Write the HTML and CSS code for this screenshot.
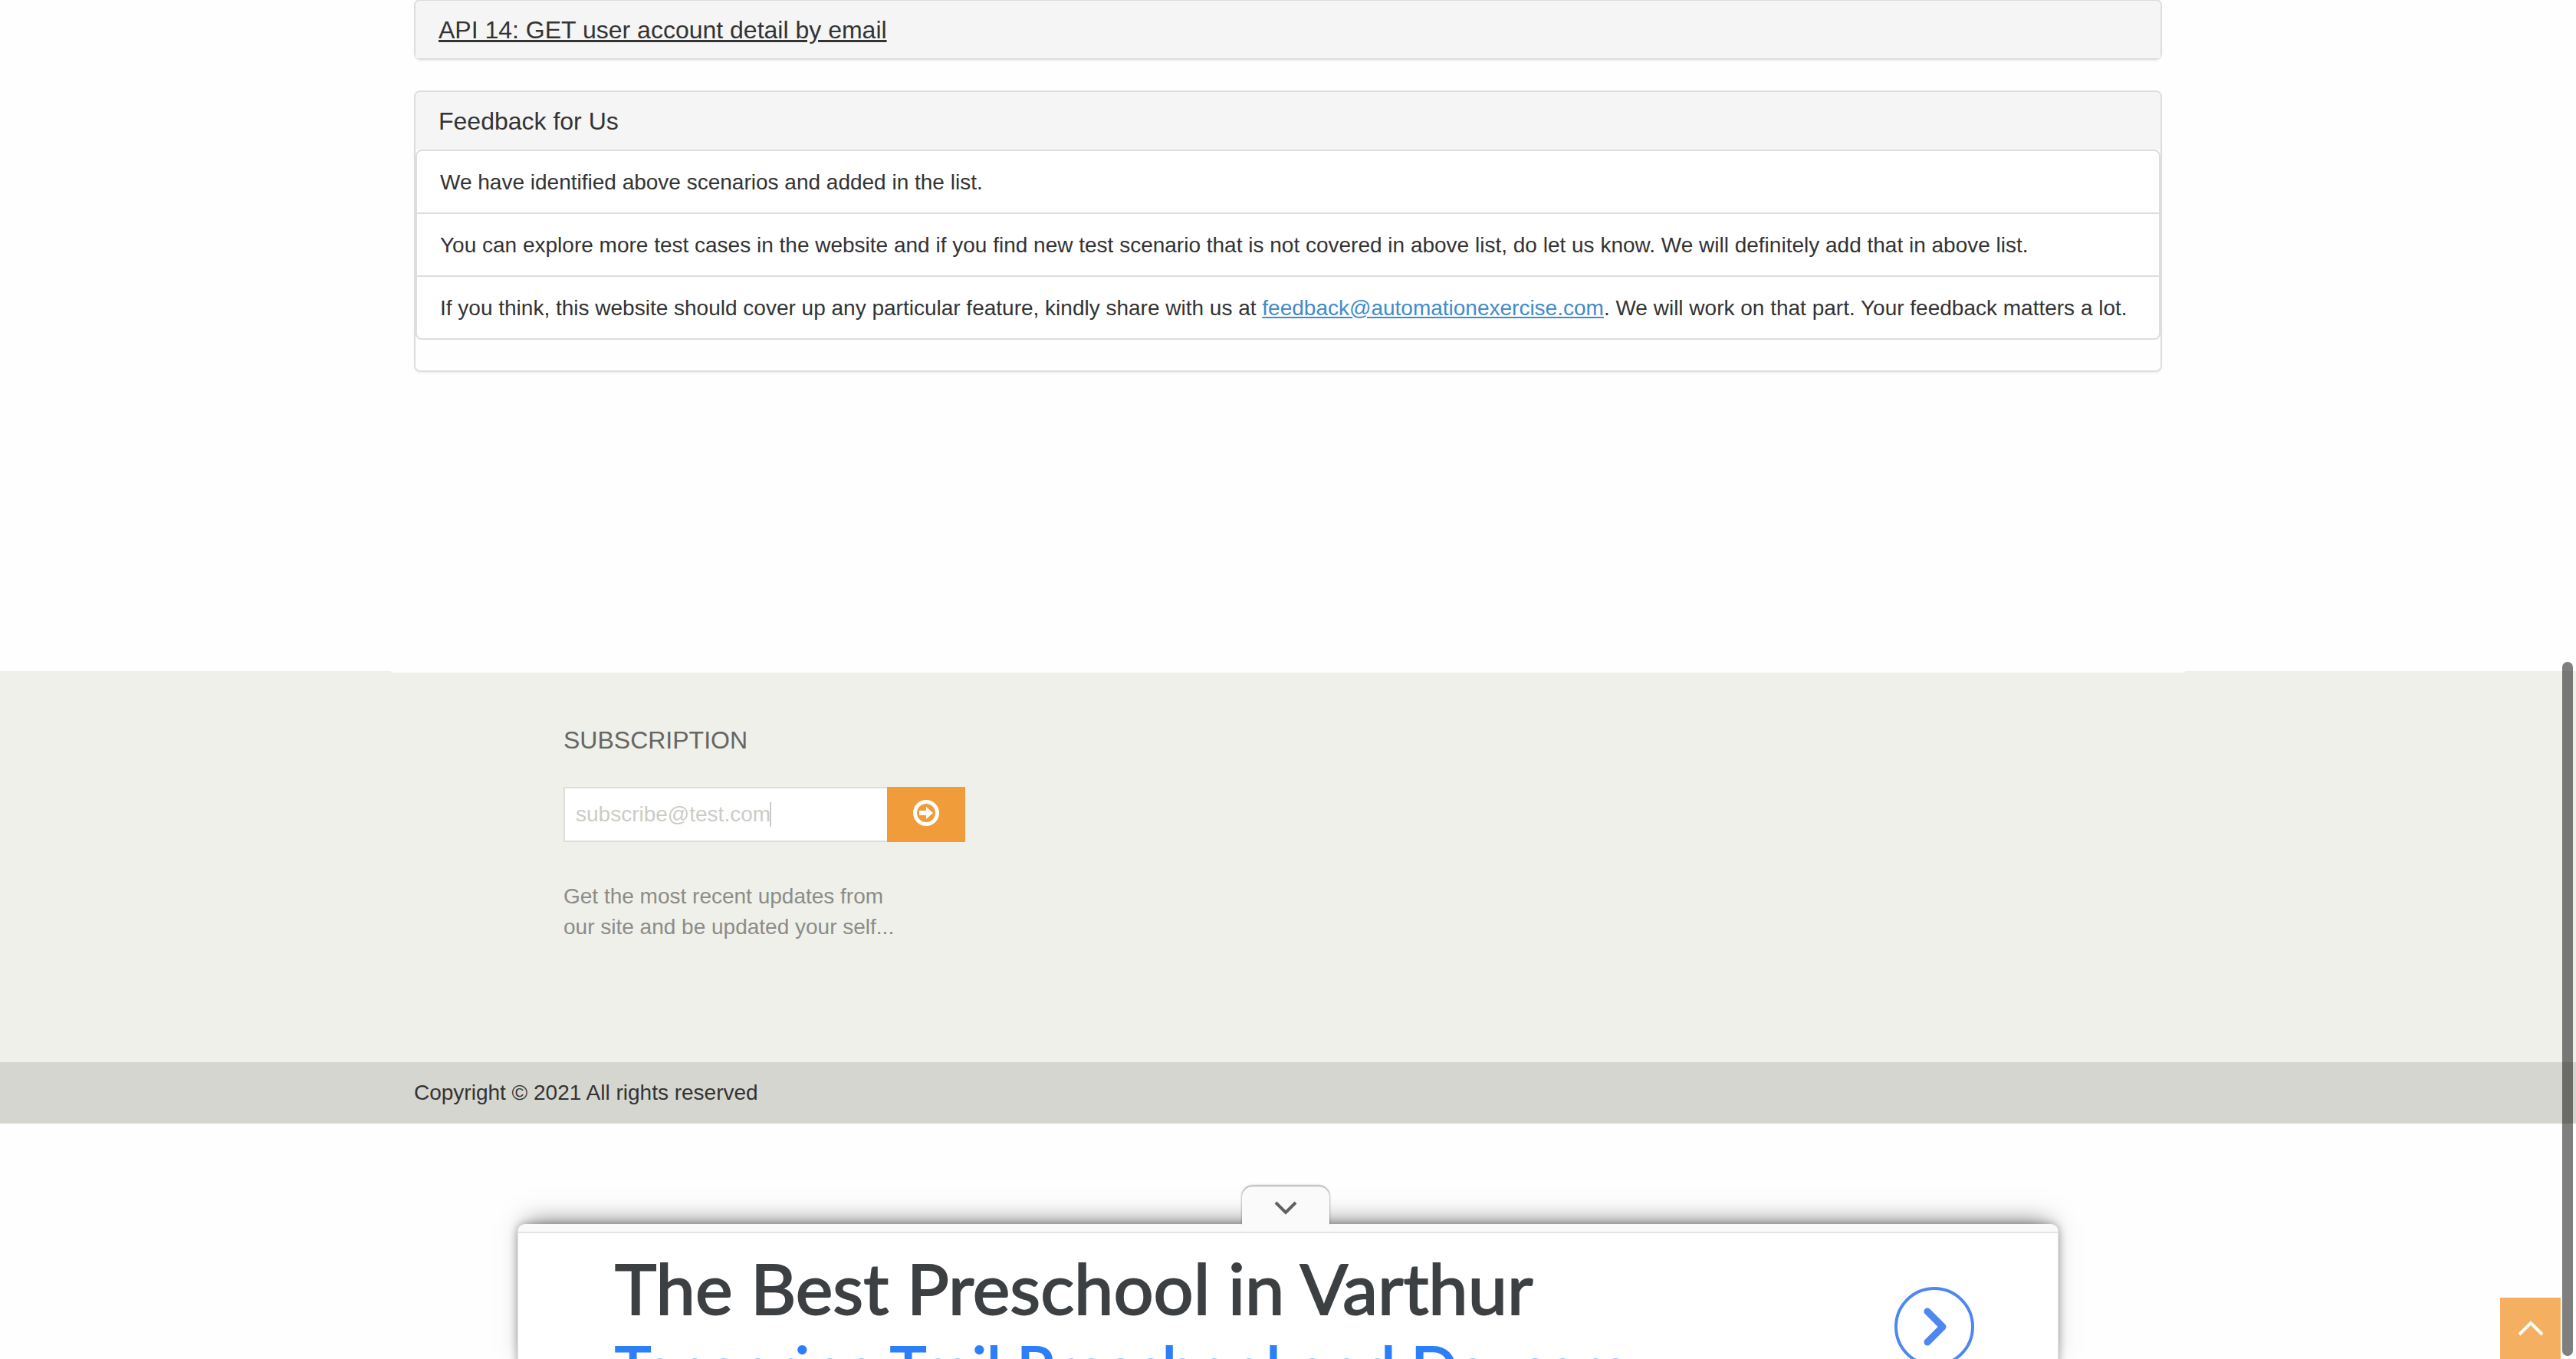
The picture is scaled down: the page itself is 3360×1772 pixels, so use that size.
FILE: index.html
```
<!DOCTYPE html>
<html lang="en">
<head>
<meta charset="utf-8">
<title>APIs List</title>
<link rel="stylesheet" href="styles.css">
</head>
<body>
<main class="container">
  <section class="panel">
    <h2 class="panel-heading"><a href="#api14">API 14: GET user account detail by email</a></h2>
  </section>
  <section class="panel">
    <h2 class="panel-heading">Feedback for Us</h2>
    <ul class="list">
      <li>We have identified above scenarios and added in the list.</li>
      <li>You can explore more test cases in the website and if you find new test scenario that is not covered in above list, do let us know. We will definitely add that in above list.</li>
      <li>If you think, this website should cover up any particular feature, kindly share with us at <a href="mailto:feedback@automationexercise.com">feedback@automationexercise.com</a>. We will work on that part. Your feedback matters a lot.</li>
    </ul>
  </section>
</main>
<footer>
  <div class="footer-widget">
    <div class="footer-edge"></div>
    <form class="subscribe">
      <h2><label for="email">Subscription</label></h2>
      <div class="field">
        <input id="email" type="email" value="subscribe@test.com">
        <span class="caret"></span>
        <button type="submit" aria-label="Subscribe">
          <svg viewBox="0 0 34 34" width="34" height="34"><circle cx="17" cy="17" r="14.5" fill="none" stroke="#fff" stroke-width="5"/><path d="M8 14h9V9l9 8-9 8v-5H8z" fill="#fff"/></svg>
        </button>
      </div>
      <p>Get the most recent updates from<br>our site and be updated your self...</p>
    </form>
  </div>
  <div class="footer-bottom"><p>Copyright © 2021 All rights reserved</p></div>
</footer>
<aside class="ad">
  <button class="ad-tab" aria-label="Collapse ad"><svg viewBox="0 0 32 20" width="32" height="20"><path d="M3 3l13 13L29 3" fill="none" stroke="#616161" stroke-width="4"/></svg></button>
  <div class="ad-body">
    <div class="ad-copy">
      <h3>The Best Preschool in Varthur</h3>
      <p>Tangerine Trail Preschool and Daycare</p>
    </div>
    <a class="ad-go" href="#ad" aria-label="Open"><svg viewBox="0 0 104 104" width="104" height="104"><circle cx="52" cy="52" r="50" fill="none" stroke="#4f87f0" stroke-width="4"/><path d="M43 32l20 20-20 20" fill="none" stroke="#4f87f0" stroke-width="9" stroke-linecap="round" stroke-linejoin="round"/></svg></a>
  </div>
</aside>
<a class="to-top" href="#top" aria-label="Scroll to top"><svg viewBox="0 0 34 20" width="34" height="20"><path d="M2 18L17 3l15 15" fill="none" stroke="#fff" stroke-width="4"/></svg></a>
<div class="scroll-thumb"></div>
</body>
</html>
```
FILE: styles.css
```
* { box-sizing: border-box; }
html { overflow: hidden; }
body {
  margin: 0;
  background: #fefefe;
  color: #333;
  font: 28px/40px "Liberation Sans", Arial, sans-serif;
}
h2, h3, p, ul { margin: 0; padding: 0; font-weight: 400; }
.container { max-width: 2280px; margin: -1px auto 0; }
.panel {
  margin-bottom: 40px;
  border: 2px solid #ddd;
  border-radius: 8px;
  box-shadow: 0 2px 2px rgba(0, 0, 0, .05);
}
.panel-heading {
  padding: 21px 30px 19px;
  background: #f5f5f5;
  border-radius: 6px 6px 0 0;
  font-size: 32px;
  line-height: 35px;
}
.panel-heading a { color: inherit; }
.list { list-style: none; margin-bottom: 40px; border: 2px solid #ddd; border-radius: 8px; background: #fff; }
.list li { padding: 21px 30px 19px; }
.list li + li { border-top: 2px solid #ddd; }
.list a { color: #428bca; }
footer { margin-top: 390px; }
.footer-widget { background: #eff0ea; padding-bottom: 156px; }
.footer-edge { height: 2px; max-width: 2340px; margin: 0 auto; background: #fefefe; }
.subscribe { max-width: 1890px; margin: 0 auto; padding-top: 70px; }
.subscribe h2 { color: #666663; font-size: 32px; line-height: 36px; text-transform: uppercase; }
.field { position: relative; display: flex; margin: 43px 0 51px; }
.field input {
  width: 422px; height: 72px; padding: 0 14px;
  border: 2px solid #ddd; border-right: 0; border-radius: 0; outline: 0;
  background: #fff; color: #ccccc6; font: inherit;
}
.caret { position: absolute; left: 269px; top: 20px; width: 2px; height: 32px; background: #ccccc6; }
.field button {
  display: flex; align-items: center; justify-content: center;
  width: 102px; height: 72px; padding: 0 0 4px; border: 0; background: #f09c3a;
}
.subscribe p { color: #8c8c88; }
.footer-bottom { background: #d6d6d0; padding: 20px; }
.footer-bottom p { max-width: 2280px; margin: 0 auto; }
.ad {
  position: fixed; top: 1596px; left: 50%; width: 2010px; height: 200px; margin-left: -1005px;
  border: 1px solid #e4e4e4; border-top: 10px solid #fafafa; border-radius: 10px 10px 0 0;
  background: #fff;
  box-shadow: 0 -14px 30px -12px rgba(0, 0, 0, .5), 0 0 12px rgba(0, 0, 0, .3);
}
.ad-tab {
  position: absolute; top: -59px; left: 944px; width: 114px; height: 50px; padding: 8px 0 0;
  border: 0; border-radius: 14px 14px 0 0; background: #fafafa;
  box-shadow: 0 -1px 3px rgba(0, 0, 0, .5);
  clip-path: inset(-6px -6px 0 -6px);
}
.ad-body { display: flex; justify-content: space-between; border-top: 2px solid #e4e4e4; padding: 16px 109px 0 126px; }
.ad-copy { font-family: Lato, sans-serif; font-weight: 400; white-space: nowrap; -webkit-text-stroke: 2px currentColor; }
.ad-copy h3 { font-size: 92px; line-height: 110px; color: #3c4043; }
.ad-copy p { font-size: 80px; line-height: 96px; color: #2d7ff9; }
.ad-go { margin-top: 54px; }
.to-top {
  position: fixed; right: 20px; bottom: 0; width: 79px; height: 80px;
  display: flex; align-items: center; justify-content: center; background: #f5af61;
}
.scroll-thumb {
  position: fixed; top: 863px; right: 4px; bottom: 4px; width: 14px;
  border-radius: 7px; background: rgba(0, 0, 0, .5);
}
```
